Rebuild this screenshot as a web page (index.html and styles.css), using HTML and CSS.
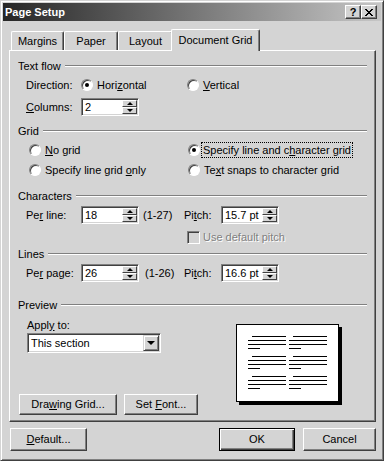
FILE: index.html
```html
<!DOCTYPE html>
<html lang="en">
<head>
    <meta charset="UTF-8">
    <title>Page Setup</title>
    <link rel="stylesheet" href="styles.css">
</head>
<body>
    <div class="dialog">
        <div class="title-bar">
            <span class="title">Page Setup</span>
            <div class="title-buttons">
                <div class="title-btn">?</div>
                <div class="title-btn">
                    <svg width="8" height="7" viewBox="0 0 8 7" shape-rendering="crispEdges">
                        <rect x="0" y="0" width="2" height="1"/><rect x="6" y="0" width="2" height="1"/>
                        <rect x="1" y="1" width="2" height="1"/><rect x="5" y="1" width="2" height="1"/>
                        <rect x="2" y="2" width="4" height="1"/>
                        <rect x="3" y="3" width="2" height="1"/>
                        <rect x="2" y="4" width="4" height="1"/>
                        <rect x="1" y="5" width="2" height="1"/><rect x="5" y="5" width="2" height="1"/>
                        <rect x="0" y="6" width="2" height="1"/><rect x="6" y="6" width="2" height="1"/>
                    </svg>
                </div>
            </div>
        </div>

        <div class="tabs">
            <div class="tab tab-margins">Margins</div>
            <div class="tab tab-paper">Paper</div>
            <div class="tab tab-layout">Layout</div>
            <div class="tab tab-active">Document Grid</div>
        </div>

        <div class="panel">
            <!-- Text flow -->
            <div class="group-title">Text flow</div>
            <div class="row row-direction">
                <span class="field-label">Direction:</span>
                <span class="option option-wide"><span class="radio checked"></span><span>Hori<u>z</u>ontal</span></span>
                <span class="option"><span class="radio"></span><span><u>V</u>ertical</span></span>
            </div>
            <div class="row row-columns">
                <span class="field-label"><u>C</u>olumns:</span>
                <div class="spin">
                    <span class="spin-value">2</span>
                    <span class="spin-btns"><span class="spin-btn up"></span><span class="spin-btn down"></span></span>
                </div>
            </div>

            <!-- Grid -->
            <div class="group-title group-grid">Grid</div>
            <div class="row grid-row grid-row-1">
                <span class="option option-grid"><span class="radio"></span><span><u>N</u>o grid</span></span>
                <span class="option"><span class="radio checked"></span><span class="focus">Specify line and c<u>h</u>aracter grid</span></span>
            </div>
            <div class="row grid-row grid-row-2">
                <span class="option option-grid"><span class="radio"></span><span>Specify line grid <u>o</u>nly</span></span>
                <span class="option"><span class="radio"></span><span>Te<u>x</u>t snaps to character grid</span></span>
            </div>

            <!-- Characters -->
            <div class="group-title group-chars">Characters</div>
            <div class="row row-perline">
                <span class="field-label">Pe<u>r</u> line:</span>
                <div class="spin">
                    <span class="spin-value">18</span>
                    <span class="spin-btns"><span class="spin-btn up"></span><span class="spin-btn down"></span></span>
                </div>
                <span class="range">(1-27)</span>
                <span class="pitch-label">Pi<u>t</u>ch:</span>
                <div class="spin">
                    <span class="spin-value">15.7 pt</span>
                    <span class="spin-btns"><span class="spin-btn up"></span><span class="spin-btn down"></span></span>
                </div>
            </div>
            <div class="row row-check">
                <span class="checkbox"></span>
                <span class="disabled">Use default pitch</span>
            </div>

            <!-- Lines -->
            <div class="group-title group-lines">Lines</div>
            <div class="row row-perpage">
                <span class="field-label">Pe<u>r</u> page:</span>
                <div class="spin">
                    <span class="spin-value">26</span>
                    <span class="spin-btns"><span class="spin-btn up"></span><span class="spin-btn down"></span></span>
                </div>
                <span class="range range-lines">(1-26)</span>
                <span class="pitch-label">Pi<u>t</u>ch:</span>
                <div class="spin">
                    <span class="spin-value">16.6 pt</span>
                    <span class="spin-btns"><span class="spin-btn up"></span><span class="spin-btn down"></span></span>
                </div>
            </div>

            <!-- Preview -->
            <div class="group-title group-preview">Preview</div>
            <div class="preview-body">
                <div class="preview-left">
                    <div class="apply-label">Appl<u>y</u> to:</div>
                    <div class="combo">
                        <span class="combo-value">This section</span>
                        <span class="combo-btn"></span>
                    </div>
                    <div class="preview-buttons">
                        <div class="btn btn-drawing">Dra<u>w</u>ing Grid...</div>
                        <div class="btn btn-font">Set <u>F</u>ont...</div>
                    </div>
                </div>
                <div class="page">
                    <svg width="101" height="76" viewBox="0 0 101 76" shape-rendering="crispEdges">
                        <g stroke="#000" stroke-width="1">
                            <path d="M15 11.5H49M11 15.5H49M11 19.5H49M11 23.5H23"/>
                            <path d="M56 11.5H90M52 15.5H90M52 19.5H90M52 23.5H64"/>
                            <path d="M15 31.5H49M11 35.5H49M11 39.5H49M11 43.5H23"/>
                            <path d="M56 31.5H90M52 35.5H90M52 39.5H90M52 43.5H64"/>
                            <path d="M15 51.5H49M11 55.5H49M11 59.5H49M11 63.5H23"/>
                            <path d="M56 51.5H90M52 55.5H90M52 59.5H90M52 63.5H64"/>
                        </g>
                    </svg>
                </div>
            </div>
        </div>

        <div class="dialog-buttons">
            <div class="btn btn-default"><u>D</u>efault...</div>
            <div class="btn btn-ok">OK</div>
            <div class="btn btn-cancel">Cancel</div>
        </div>
    </div>
</body>
</html>
```

FILE: styles.css
```css
body {
    margin: 0;
    background-color: #d4d4d4;
    font-family: "Liberation Sans", Arial, sans-serif;
    font-size: 11px;
    color: #000;
}

.dialog {
    box-sizing: border-box;
    width: 384px;
    height: 461px;
    padding: 2px;
    background-color: #d4d4d4;
    border: 1px solid;
    border-color: #d4d4d4 #404040 #404040 #d4d4d4;
    box-shadow: inset 1px 1px #fff, inset -1px -1px #808080;
}

/* Title bar */
.title-bar {
    display: flex;
    align-items: center;
    height: 18px;
    padding: 0 4px 0 2px;
    background: linear-gradient(to right, #262626, #c6c6c6);
}
.title {
    color: #fff;
    font-weight: bold;
    font-size: 11px;
}
.title-buttons {
    display: flex;
    margin-left: auto;
}
.title-btn {
    box-sizing: border-box;
    width: 16px;
    height: 14px;
    display: flex;
    align-items: center;
    justify-content: center;
    background-color: #d4d4d4;
    border: 1px solid;
    border-color: #fff #404040 #404040 #fff;
    box-shadow: inset -1px -1px #808080;
    font-weight: bold;
    font-size: 11px;
    line-height: 12px;
}

/* Tabs */
.tabs {
    display: flex;
    align-items: flex-end;
    height: 21px;
    margin-top: 8px;
    padding-left: 8px;
}
.tab {
    box-sizing: border-box;
    height: 19px;
    padding-top: 2px;
    text-align: center;
    line-height: 15px;
    border: 1px solid;
    border-bottom: none;
    border-color: #fff #404040 #fff #fff;
    border-radius: 2px 2px 0 0;
    box-shadow: inset -1px 0 #808080;
}
.tab-margins { width: 53px; }
.tab-paper { width: 54px; }
.tab-layout { width: 55px; }
.tab-active {
    position: relative;
    z-index: 1;
    width: 89px;
    height: 22px;
    margin-left: -2px;
    margin-bottom: -1px;
    padding-top: 2px;
    line-height: 17px;
    background-color: #d4d4d4;
}

/* Panel */
.panel {
    box-sizing: border-box;
    width: 367px;
    margin-left: 6px;
    padding: 8px 8px 6px 8px;
    border: 1px solid;
    border-color: #fff #404040 #404040 #fff;
    box-shadow: inset -1px -1px #808080;
}
.group-title {
    display: flex;
    align-items: center;
    height: 14px;
    line-height: 14px;
}
.group-title::after {
    content: "";
    flex: 1;
    margin-left: 4px;
    border-top: 1px solid #808080;
    border-bottom: 1px solid #fff;
}
.group-grid { margin-top: 8px; }
.group-chars { margin-top: 10px; }
.group-lines { margin-top: 1px; }
.group-preview { margin-top: 16px; }

.row {
    display: flex;
    align-items: center;
    height: 18px;
    padding-left: 8px;
}
.row-direction { margin-top: 3px; }
.row-columns { margin-top: 4px; }
.grid-row { padding-left: 11px; }
.grid-row-1 { margin-top: 3px; }
.grid-row-2 { margin-top: 2px; }
.row-perline { margin-top: 3px; }
.row-check { margin-top: 4px; padding-left: 169px; }
.row-perpage { margin-top: 3px; }

.field-label { width: 55px; }
.option {
    display: flex;
    align-items: center;
    gap: 4px;
}
.option-wide { width: 106px; }
.option-grid { width: 159px; }
.focus {
    outline: 1px dotted #000;
    padding: 0 1px;
    margin-left: -2px;
    line-height: 14px;
}

.range {
    box-sizing: border-box;
    width: 45px;
    padding-left: 4px;
}
.range-lines { padding-left: 6px; }
.pitch-label { width: 37px; }

/* Radio and check box */
.radio {
    box-sizing: border-box;
    flex-shrink: 0;
    width: 12px;
    height: 12px;
    display: flex;
    align-items: center;
    justify-content: center;
    border-radius: 50%;
    background-color: #fff;
    border: 1px solid;
    border-color: #808080 #fff #fff #808080;
    box-shadow: inset 1px 1px #404040;
}
.radio.checked::after {
    content: "";
    width: 4px;
    height: 4px;
    border-radius: 50%;
    background-color: #000;
}
.checkbox {
    box-sizing: border-box;
    width: 13px;
    height: 13px;
    margin-right: 3px;
    background-color: #d4d4d4;
    border: 1px solid;
    border-color: #808080 #fff #fff #808080;
    box-shadow: inset 1px 1px #404040, inset -1px -1px #d4d4d4;
}
.disabled {
    color: #808080;
    text-shadow: 1px 1px 0 #fff;
}

/* Spin edit */
.spin {
    box-sizing: border-box;
    display: flex;
    width: 58px;
    height: 18px;
    padding: 1px;
    background-color: #fff;
    border: 1px solid;
    border-color: #808080 #fff #fff #808080;
    box-shadow: inset 1px 1px #404040, inset -1px -1px #d4d4d4;
}
.spin-value {
    flex: 1;
    padding-left: 2px;
    line-height: 14px;
}
.spin-btns {
    display: flex;
    flex-direction: column;
    width: 15px;
}
.spin-btn {
    box-sizing: border-box;
    height: 7px;
    display: flex;
    align-items: center;
    justify-content: center;
    background-color: #d4d4d4;
    border: 1px solid;
    border-color: #fff #404040 #404040 #fff;
}
.spin-btn.up::after {
    content: "";
    border-left: 3px solid transparent;
    border-right: 3px solid transparent;
    border-bottom: 3px solid #000;
}
.spin-btn.down::after {
    content: "";
    border-left: 3px solid transparent;
    border-right: 3px solid transparent;
    border-top: 3px solid #000;
}

/* Preview */
.preview-body {
    display: flex;
}
.preview-left {
    display: flex;
    flex-direction: column;
    width: 218px;
}
.apply-label {
    margin: 6px 0 0 9px;
    line-height: 14px;
}
.combo {
    box-sizing: border-box;
    display: flex;
    align-items: center;
    width: 134px;
    height: 20px;
    margin: 1px 0 0 9px;
    padding: 1px;
    background-color: #fff;
    border: 1px solid;
    border-color: #808080 #fff #fff #808080;
    box-shadow: inset 1px 1px #404040, inset -1px -1px #d4d4d4;
}
.combo-value {
    flex: 1;
    padding-left: 2px;
}
.combo-btn {
    box-sizing: border-box;
    width: 16px;
    height: 16px;
    display: flex;
    align-items: center;
    justify-content: center;
    background-color: #d4d4d4;
    border: 1px solid;
    border-color: #d4d4d4 #404040 #404040 #d4d4d4;
    box-shadow: inset 1px 1px #fff, inset -1px -1px #808080;
}
.combo-btn::after {
    content: "";
    border-left: 4px solid transparent;
    border-right: 4px solid transparent;
    border-top: 4px solid #000;
}
.preview-buttons {
    display: flex;
    gap: 7px;
    margin: 41px 0 0 1px;
}
.page {
    box-sizing: border-box;
    width: 103px;
    height: 78px;
    margin-top: 12px;
    background-color: #fff;
    border: 1px solid #000;
    box-shadow: 3px 3px 0 #000;
}
.page svg {
    display: block;
}

/* Buttons */
.btn {
    box-sizing: border-box;
    height: 21px;
    line-height: 19px;
    text-align: center;
    background-color: #d4d4d4;
    border: 1px solid;
    border-color: #fff #404040 #404040 #fff;
    box-shadow: inset -1px -1px #808080;
}
.btn-drawing { width: 98px; }
.btn-font { width: 74px; }

.dialog-buttons {
    display: flex;
    margin-top: 6px;
    padding: 0 5px 0 7px;
}
.dialog-buttons .btn {
    height: 23px;
    line-height: 21px;
}
.btn-default { width: 77px; }
.btn-ok {
    width: 76px;
    margin-left: auto;
    border: 1px solid #000;
    box-shadow: inset 1px 1px #fff, inset -1px -1px #404040, inset -2px -2px #808080;
}
.btn-cancel {
    width: 73px;
    margin-left: 8px;
}
```
